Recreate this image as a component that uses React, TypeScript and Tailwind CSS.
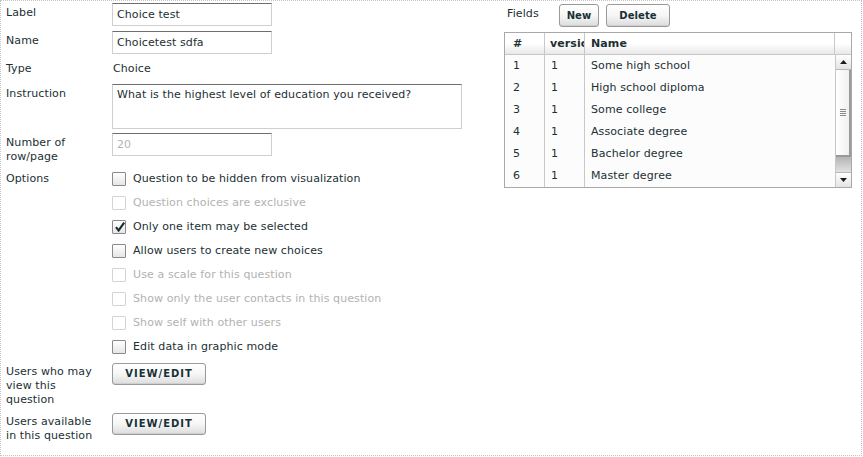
import { Fragment } from 'react';

const font = { fontFamily: '"DejaVu Sans", Verdana, sans-serif' };

const options: { text: string; disabled?: boolean; checked?: boolean }[] = [
  { text: 'Question to be hidden from visualization' },
  { text: 'Question choices are exclusive', disabled: true },
  { text: 'Only one item may be selected', checked: true },
  { text: 'Allow users to create new choices' },
  { text: 'Use a scale for this question', disabled: true },
  { text: 'Show only the user contacts in this question', disabled: true },
  { text: 'Show self with other users', disabled: true },
  { text: 'Edit data in graphic mode' },
];

const rows = [
  'Some high school',
  'High school diploma',
  'Some college',
  'Associate degree',
  'Bachelor degree',
  'Master degree',
];

function Checkbox({ checked, disabled }: { checked?: boolean; disabled?: boolean }) {
  return (
    <span
      className={`relative block h-[14px] w-[14px] rounded-[1px] border ${
        disabled ? 'border-[#d4d4d4] bg-white' : 'border-[#8a8a8a] bg-gradient-to-b from-white to-[#e6e6e6]'
      }`}
    >
      {checked && (
        <svg viewBox="0 0 12 12" className="absolute left-[1px] top-[0px] h-[12px] w-[12px]">
          <path d="M2 6.2 L4.6 9.4 L10.2 1.6" fill="none" stroke="#1b2b2e" strokeWidth="2.1" />
        </svg>
      )}
    </span>
  );
}

function Button({ children, className = '' }: { children: React.ReactNode; className?: string }) {
  return (
    <button
      className={`flex items-center justify-center rounded-[3px] border border-[#9a9a9a] bg-gradient-to-b from-white via-[#f6f6f6] to-[#dcdcdc] text-[10px] font-bold text-[#173035] shadow-[inset_0_-1px_0_#cfcfcf] ${className}`}
    >
      {children}
    </button>
  );
}

function TextInput({ value, muted, className = '' }: { value: string; muted?: boolean; className?: string }) {
  return (
    <div
      className={`flex h-[23px] w-[160px] items-center border border-[#cfcfcf] border-t-[#6e6e6e] bg-white px-[4px] text-[11px] ${
        muted ? 'text-[#b4b4b4]' : 'text-[#1b3034]'
      } ${className}`}
    >
      {value}
    </div>
  );
}

export default function App() {
  return (
    <div
      className="h-[456px] w-[862px] border border-dotted border-[#c4c4c4] bg-white text-[11px] leading-[14px] tracking-[0.1px] text-[#1b3034]"
      style={font}
    >
      <div className="flex">
        {/* left form */}
        <div className="w-[503px] pl-[5px] pt-[2px]">
          <div className="flex h-[28px]">
            <div className="w-[106px] pt-[3px]">Label</div>
            <TextInput value="Choice test" />
          </div>
          <div className="flex h-[28px]">
            <div className="w-[106px] pt-[3px]">Name</div>
            <TextInput value="Choicetest sdfa" />
          </div>
          <div className="flex h-[25px] pt-[3px]">
            <div className="w-[106px]">Type</div>
            <div className="pl-[1px]">Choice</div>
          </div>
          <div className="flex h-[49px]">
            <div className="w-[106px] pt-[3px]">Instruction</div>
            <div className="h-[45px] w-[350px] border border-[#cfcfcf] border-t-[#6e6e6e] px-[4px] pt-[3px]">
              What is the highest level of education you received?
            </div>
          </div>
          <div className="flex h-[34px]">
            <div className="w-[106px] pt-[3px]">
              Number of
              <br />
              row/page
            </div>
            <TextInput value="20" muted />
          </div>
          <div className="flex">
            <div className="w-[106px] pt-[5px]">Options</div>
            <div className="flex flex-col">
              {options.map((o) => (
                <div key={o.text} className="flex h-[24px] items-center gap-[7px]">
                  <Checkbox checked={o.checked} disabled={o.disabled} />
                  <span className={o.disabled ? 'text-[#b2b2b2]' : ''}>{o.text}</span>
                </div>
              ))}
            </div>
          </div>
          <div className="mt-[4px] flex h-[50px]">
            <div className="w-[106px] pt-[2px]">
              Users who may
              <br />
              view this
              <br />
              question
            </div>
            <Button className="h-[22px] w-[94px] tracking-[1px]">VIEW/EDIT</Button>
          </div>
          <div className="flex">
            <div className="w-[106px] pt-[2px]">
              Users available
              <br />
              in this question
            </div>
            <Button className="h-[22px] w-[94px] tracking-[1px]">VIEW/EDIT</Button>
          </div>
        </div>

        {/* right fields */}
        <div className="pt-[3px]">
          <div className="flex items-start">
            <div className="w-[55px] pl-[3px] pt-[3px]">Fields</div>
            <Button className="h-[23px] w-[40px]">New</Button>
            <Button className="ml-[7px] h-[23px] w-[64px]">Delete</Button>
          </div>
          <div className="mt-[5px] w-[348px] border border-[#a9a9a9]">
            <div className="grid h-[22px] grid-cols-[40px_40px_250px_16px] border-b border-[#c8c8c8] bg-gradient-to-b from-white via-white to-[#e8e8e8] font-bold">
              <div className="flex items-center border-r border-[#c8c8c8] pl-[8px]">#</div>
              <div className="flex items-center overflow-hidden whitespace-nowrap border-r border-[#c8c8c8] pl-[5px]">
                versio
              </div>
              <div className="flex items-center border-r border-[#c8c8c8] pl-[6px]">Name</div>
              <div />
            </div>
            <div className="flex">
              <div className="grid flex-1 grid-cols-[40px_40px_250px] bg-[#fcfcfc]">
                {rows.map((r, i) => (
                  <Fragment key={r}>
                    <div className="flex h-[22px] items-center border-r border-[#c8c8c8] pl-[8px]">{i + 1}</div>
                    <div className="flex h-[22px] items-center border-r border-[#c8c8c8] pl-[6px]">1</div>
                    <div className="flex h-[22px] items-center pl-[6px]">{r}</div>
                  </Fragment>
                ))}
              </div>
              <div className="flex w-[16px] flex-col border-l border-[#c8c8c8] bg-[#f0f0f0]">
                <div className="flex h-[15px] items-center justify-center border-b border-[#b8b8b8] bg-gradient-to-b from-white to-[#e4e4e4]">
                  <svg viewBox="0 0 7 4" className="h-[4px] w-[7px]">
                    <path d="M0 4 L3.5 0 L7 4 Z" fill="#1b1b1b" />
                  </svg>
                </div>
                <div className="flex h-[87px] items-center justify-center border-r-2 border-b-2 border-[#9a9a9a] bg-gradient-to-r from-white to-[#f0f0f0]">
                  <div className="flex flex-col gap-[1px]">
                    <span className="block h-px w-[6px] bg-[#8a8a8a]" />
                    <span className="block h-px w-[6px] bg-[#8a8a8a]" />
                    <span className="block h-px w-[6px] bg-[#8a8a8a]" />
                    <span className="block h-px w-[6px] bg-[#8a8a8a]" />
                  </div>
                </div>
                <div className="flex-1 bg-gradient-to-b from-[#b4b4b4] to-[#e2e2e2]" />
                <div className="flex h-[15px] items-center justify-center border-t border-[#b8b8b8] bg-gradient-to-b from-white to-[#e4e4e4]">
                  <svg viewBox="0 0 7 4" className="h-[4px] w-[7px]">
                    <path d="M0 0 L3.5 4 L7 0 Z" fill="#1b1b1b" />
                  </svg>
                </div>
              </div>
            </div>
          </div>
        </div>
      </div>
    </div>
  );
}
